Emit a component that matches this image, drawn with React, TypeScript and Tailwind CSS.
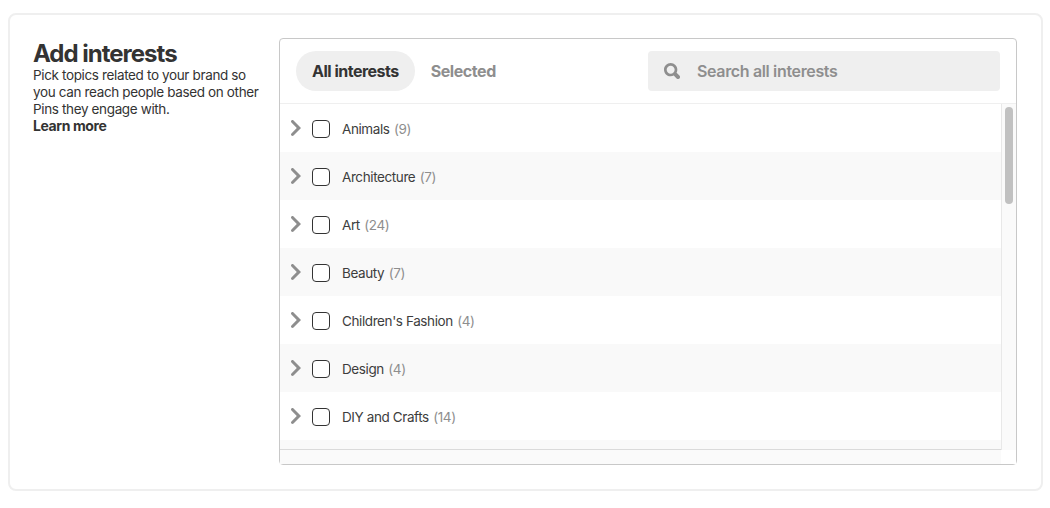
const interests = [
	{ name: "Animals", count: 9 },
	{ name: "Architecture", count: 7 },
	{ name: "Art", count: 24 },
	{ name: "Beauty", count: 7 },
	{ name: "Children's Fashion", count: 4 },
	{ name: "Design", count: 4 },
	{ name: "DIY and Crafts", count: 14 },
];

function SearchIcon() {
	return (
		<svg width="16" height="16" viewBox="0 0 24 24" fill="#8e8e8e">
			<path d="M10 16c-3.31 0-6-2.69-6-6s2.69-6 6-6 6 2.69 6 6-2.69 6-6 6m13.12 2.88-4.26-4.26A9.842 9.842 0 0 0 20 10c0-5.52-4.48-10-10-10S0 4.48 0 10s4.48 10 10 10c1.67 0 3.24-.41 4.62-1.14l4.26 4.26a3 3 0 0 0 4.24 0 3 3 0 0 0 0-4.24" />
		</svg>
	);
}

function ArrowIcon() {
	return (
		<svg width="16" height="16" viewBox="0 0 24 24" fill="#8e8e8e" className="-mt-[2px]">
			<path d="M6.72 24c.57 0 1.14-.22 1.57-.66L19.5 12 8.29.66c-.86-.88-2.27-.88-3.14 0-.87.88-.87 2.3 0 3.18L13.21 12l-8.06 8.16c-.87.88-.87 2.3 0 3.18.43.44 1 .66 1.57.66" />
		</svg>
	);
}

function InterestRow({ name, count, odd }: { name: string; count: number; odd: boolean }) {
	return (
		<div className={"flex items-center h-12 shrink-0 pl-2 pt-[2px] " + (odd ? "bg-[#f9f9f9]" : "bg-white")}>
			<ArrowIcon />
			<div className="w-[18px] h-[18px] ml-2 border border-[#333] rounded-[4px] bg-white" />
			<div className="ml-3 text-[13.5px] tracking-[-0.4px] text-[#3d3d3d]">
				{name} <span className="ml-[1px] text-[#8e8e8e]">({count})</span>
			</div>
		</div>
	);
}

export default function App() {
	return (
		<div className="w-[1050px] h-[508px] pt-[13px] pl-2 pr-[7px] bg-white font-['Inter',sans-serif] overflow-hidden">
			<div className="flex h-[478px] pt-[23px] pl-[23px] border-2 border-[#efefef] rounded-[8px]">
				<div className="w-[246px] shrink-0 pt-[4px] text-[#333]">
					<h1 className="text-[24px] leading-[24px] font-bold tracking-[-1px]">Add interests</h1>
					<p className="w-[235px] mt-[1px] text-[13.5px] leading-[17px] tracking-[-0.36px]">
						Pick topics related to your brand so you can reach people based on other Pins they engage with.
					</p>
					<a className="block -mt-[1px] text-[14px] leading-[17px] font-bold tracking-[-0.4px]">Learn more</a>
				</div>

				<div className="flex flex-col w-[738px] h-[427px] border border-[#c8c8c8] rounded-[4px]">
					<div className="flex items-center justify-between h-[65px] shrink-0 px-4 border-b border-[#efefef]">
						<div className="flex items-center">
							<div className="flex items-center h-10 px-4 rounded-full bg-[#efefef] text-[16px] font-bold text-[#333] tracking-[-0.5px]">
								All interests
							</div>
							<div className="px-4 text-[16px] font-bold text-[#8e8e8e] tracking-[-0.45px]">Selected</div>
						</div>
						<div className="flex items-center w-[352px] h-10 pl-4 rounded-[4px] bg-[#efefef]">
							<SearchIcon />
							<span className="ml-[17px] text-[16px] font-semibold text-[#8e8e8e] tracking-[-0.35px]">
								Search all interests
							</span>
						</div>
					</div>

					<div className="flex flex-1 min-h-0">
						<div className="flex-1 flex flex-col overflow-hidden border-b border-[#dadada]">
							{interests.map((item, i) => (
								<InterestRow key={item.name} name={item.name} count={item.count} odd={i % 2 === 1} />
							))}
							<div className="flex-1 bg-[#f9f9f9]" />
						</div>
						<div className="w-[15px] shrink-0 pt-[3px] pl-[3px] border-l border-[#e8e8e8] bg-[#fafafa]">
							<div className="w-2 h-[97px] rounded-full bg-[#c1c1c1]" />
						</div>
					</div>

					<div className="flex h-[14px] shrink-0">
						<div className="flex-1 bg-[#fafafa]" />
						<div className="w-[15px] bg-white" />
					</div>
				</div>
			</div>
		</div>
	);
}
